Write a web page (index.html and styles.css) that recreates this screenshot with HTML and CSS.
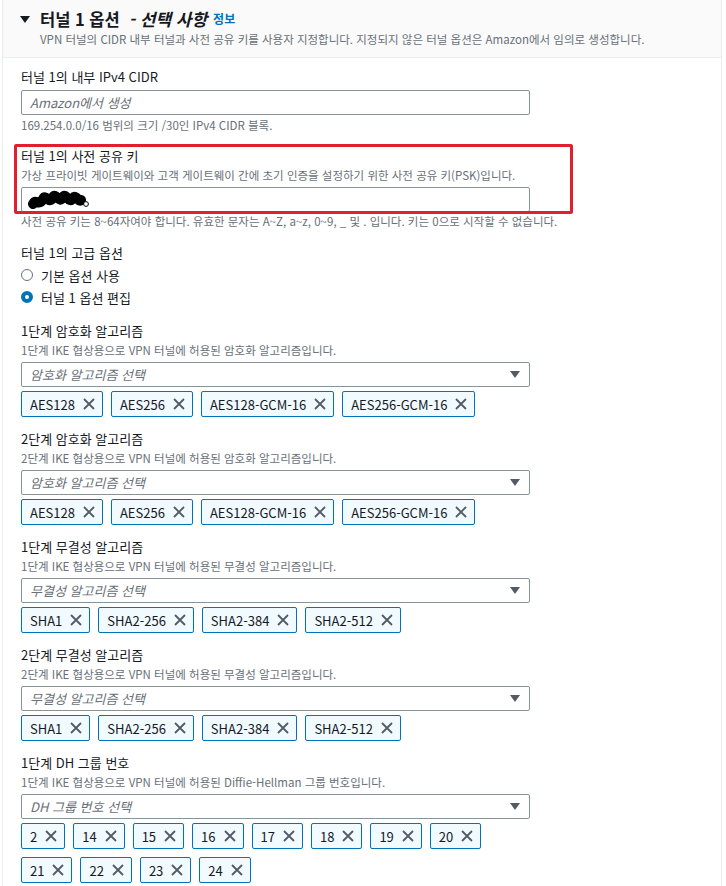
FILE: index.html
```html
<!DOCTYPE html>
<html lang="ko">
<head>
    <meta charset="UTF-8">
    <title>터널 1 옵션</title>
    <link rel="stylesheet" href="styles.css">
</head>
<body>
    <section class="panel">
        <header class="panel-header">
            <h2 class="panel-title">
                <svg class="caret" viewBox="0 0 10 7"><path d="M0 0H10L5 7Z" fill="currentColor"/></svg>
                <span class="title-main">터널 1 옵션</span>
                <span class="title-opt">- 선택 사항</span>
                <a class="info-link">정보</a>
            </h2>
            <p class="panel-desc">VPN 터널의 CIDR 내부 터널과 사전 공유 키를 사용자 지정합니다. 지정되지 않은 터널 옵션은 Amazon에서 임의로 생성합니다.</p>
        </header>

        <div class="panel-body">
            <div class="field field-cidr">
                <div class="label">터널 1의 내부 IPv4 CIDR</div>
                <div class="input placeholder">Amazon에서 생성</div>
                <div class="hint">169.254.0.0/16 범위의 크기 /30인 IPv4 CIDR 블록.</div>
            </div>

            <div class="field field-psk">
                <div class="label">터널 1의 사전 공유 키</div>
                <div class="desc">가상 프라이빗 게이트웨이와 고객 게이트웨이 간에 초기 인증을 설정하기 위한 사전 공유 키(PSK)입니다.</div>
                <div class="input input-psk">
                    <svg class="scribble" viewBox="0 0 62 22">
                        <path d="M5 15 C8 9 11 18 15 10 C18 4 21 17 25 8 C28 3 31 16 35 8 C38 3 41 16 45 9 C48 5 51 14 53 11" fill="none" stroke="#000" stroke-width="10" stroke-linecap="round" stroke-linejoin="round"/>
                        <circle cx="58" cy="15" r="2.4" fill="#fff" stroke="#000" stroke-width="1"/>
                    </svg>
                </div>
                <div class="hint">사전 공유 키는 8~64자여야 합니다. 유효한 문자는 A~Z, a~z, 0~9, _ 및 . 입니다. 키는 0으로 시작할 수 없습니다.</div>
                <div class="highlight"></div>
            </div>

            <div class="field field-adv">
                <div class="label">터널 1의 고급 옵션</div>
                <div class="radios">
                    <div class="radio"><span class="radio-dot"></span>기본 옵션 사용</div>
                    <div class="radio"><span class="radio-dot checked"></span>터널 1 옵션 편집</div>
                </div>
            </div>

            <div class="field field-multi">
                <div class="label">1단계 암호화 알고리즘</div>
                <div class="desc">1단계 IKE 협상용으로 VPN 터널에 허용된 암호화 알고리즘입니다.</div>
                <div class="select"><span class="placeholder">암호화 알고리즘 선택</span><svg class="arrow" viewBox="0 0 10 7"><path d="M0 0H10L5 7Z"/></svg></div>
                <div class="tags">
                    <span class="tag">AES128<svg class="x" viewBox="0 0 12 12"><path d="M1 1L11 11M11 1L1 11"/></svg></span>
                    <span class="tag">AES256<svg class="x" viewBox="0 0 12 12"><path d="M1 1L11 11M11 1L1 11"/></svg></span>
                    <span class="tag">AES128-GCM-16<svg class="x" viewBox="0 0 12 12"><path d="M1 1L11 11M11 1L1 11"/></svg></span>
                    <span class="tag">AES256-GCM-16<svg class="x" viewBox="0 0 12 12"><path d="M1 1L11 11M11 1L1 11"/></svg></span>
                </div>
            </div>

            <div class="field field-multi">
                <div class="label">2단계 암호화 알고리즘</div>
                <div class="desc">2단계 IKE 협상용으로 VPN 터널에 허용된 암호화 알고리즘입니다.</div>
                <div class="select"><span class="placeholder">암호화 알고리즘 선택</span><svg class="arrow" viewBox="0 0 10 7"><path d="M0 0H10L5 7Z"/></svg></div>
                <div class="tags">
                    <span class="tag">AES128<svg class="x" viewBox="0 0 12 12"><path d="M1 1L11 11M11 1L1 11"/></svg></span>
                    <span class="tag">AES256<svg class="x" viewBox="0 0 12 12"><path d="M1 1L11 11M11 1L1 11"/></svg></span>
                    <span class="tag">AES128-GCM-16<svg class="x" viewBox="0 0 12 12"><path d="M1 1L11 11M11 1L1 11"/></svg></span>
                    <span class="tag">AES256-GCM-16<svg class="x" viewBox="0 0 12 12"><path d="M1 1L11 11M11 1L1 11"/></svg></span>
                </div>
            </div>

            <div class="field field-multi">
                <div class="label">1단계 무결성 알고리즘</div>
                <div class="desc">1단계 IKE 협상용으로 VPN 터널에 허용된 무결성 알고리즘입니다.</div>
                <div class="select"><span class="placeholder">무결성 알고리즘 선택</span><svg class="arrow" viewBox="0 0 10 7"><path d="M0 0H10L5 7Z"/></svg></div>
                <div class="tags">
                    <span class="tag">SHA1<svg class="x" viewBox="0 0 12 12"><path d="M1 1L11 11M11 1L1 11"/></svg></span>
                    <span class="tag">SHA2-256<svg class="x" viewBox="0 0 12 12"><path d="M1 1L11 11M11 1L1 11"/></svg></span>
                    <span class="tag">SHA2-384<svg class="x" viewBox="0 0 12 12"><path d="M1 1L11 11M11 1L1 11"/></svg></span>
                    <span class="tag">SHA2-512<svg class="x" viewBox="0 0 12 12"><path d="M1 1L11 11M11 1L1 11"/></svg></span>
                </div>
            </div>

            <div class="field field-multi">
                <div class="label">2단계 무결성 알고리즘</div>
                <div class="desc">2단계 IKE 협상용으로 VPN 터널에 허용된 무결성 알고리즘입니다.</div>
                <div class="select"><span class="placeholder">무결성 알고리즘 선택</span><svg class="arrow" viewBox="0 0 10 7"><path d="M0 0H10L5 7Z"/></svg></div>
                <div class="tags">
                    <span class="tag">SHA1<svg class="x" viewBox="0 0 12 12"><path d="M1 1L11 11M11 1L1 11"/></svg></span>
                    <span class="tag">SHA2-256<svg class="x" viewBox="0 0 12 12"><path d="M1 1L11 11M11 1L1 11"/></svg></span>
                    <span class="tag">SHA2-384<svg class="x" viewBox="0 0 12 12"><path d="M1 1L11 11M11 1L1 11"/></svg></span>
                    <span class="tag">SHA2-512<svg class="x" viewBox="0 0 12 12"><path d="M1 1L11 11M11 1L1 11"/></svg></span>
                </div>
            </div>

            <div class="field field-multi">
                <div class="label">1단계 DH 그룹 번호</div>
                <div class="desc">1단계 IKE 협상용으로 VPN 터널에 허용된 Diffie-Hellman 그룹 번호입니다.</div>
                <div class="select"><span class="placeholder">DH 그룹 번호 선택</span><svg class="arrow" viewBox="0 0 10 7"><path d="M0 0H10L5 7Z"/></svg></div>
                <div class="tags">
                    <span class="tag">2<svg class="x" viewBox="0 0 12 12"><path d="M1 1L11 11M11 1L1 11"/></svg></span>
                    <span class="tag">14<svg class="x" viewBox="0 0 12 12"><path d="M1 1L11 11M11 1L1 11"/></svg></span>
                    <span class="tag">15<svg class="x" viewBox="0 0 12 12"><path d="M1 1L11 11M11 1L1 11"/></svg></span>
                    <span class="tag">16<svg class="x" viewBox="0 0 12 12"><path d="M1 1L11 11M11 1L1 11"/></svg></span>
                    <span class="tag">17<svg class="x" viewBox="0 0 12 12"><path d="M1 1L11 11M11 1L1 11"/></svg></span>
                    <span class="tag">18<svg class="x" viewBox="0 0 12 12"><path d="M1 1L11 11M11 1L1 11"/></svg></span>
                    <span class="tag">19<svg class="x" viewBox="0 0 12 12"><path d="M1 1L11 11M11 1L1 11"/></svg></span>
                    <span class="tag">20<svg class="x" viewBox="0 0 12 12"><path d="M1 1L11 11M11 1L1 11"/></svg></span>
                    <span class="tag">21<svg class="x" viewBox="0 0 12 12"><path d="M1 1L11 11M11 1L1 11"/></svg></span>
                    <span class="tag">22<svg class="x" viewBox="0 0 12 12"><path d="M1 1L11 11M11 1L1 11"/></svg></span>
                    <span class="tag">23<svg class="x" viewBox="0 0 12 12"><path d="M1 1L11 11M11 1L1 11"/></svg></span>
                    <span class="tag">24<svg class="x" viewBox="0 0 12 12"><path d="M1 1L11 11M11 1L1 11"/></svg></span>
                </div>
            </div>
        </div>
    </section>
</body>
</html>
```

FILE: styles.css
```css
:root {
    --clr-text: #16191f;
    --clr-muted: #687078;
    --clr-icon: #545b64;
    --clr-border: #eaeded;
    --clr-input: #879596;
    --clr-primary: #0073bb;
    --clr-tag-bg: #f1faff;
    --clr-mark: #e0202f;
}

* {
    margin: 0;
    padding: 0;
    box-sizing: border-box;
}

body {
    font-family: "Noto Sans CJK KR", "Noto Sans", sans-serif;
    color: var(--clr-text);
    background: #fff;
}

.panel {
    margin-left: 2px;
    width: 720px;
    min-height: 886px;
    border-left: 1px solid var(--clr-border);
    border-right: 1px solid var(--clr-border);
}

.panel-header {
    background: #fafafa;
    border-bottom: 1px solid var(--clr-border);
    padding: 8px 18px 10px 17px;
}

.panel-title {
    display: flex;
    align-items: center;
    height: 22px;
    font-size: 16.5px;
    font-weight: 700;
    line-height: 22px;
}

.caret {
    width: 10px;
    height: 7px;
    margin-right: 10px;
    color: var(--clr-text);
}

.title-opt {
    margin-left: 9px;
    font-size: 17px;
    font-style: italic;
}

.info-link {
    margin-left: 6px;
    font-size: 12px;
    color: var(--clr-primary);
}

.panel-desc {
    margin-top: 1px;
    padding-left: 20px;
    font-size: 11.5px;
    line-height: 16px;
    color: var(--clr-muted);
}

.panel-body {
    padding: 10px 18px 0 18px;
}

.label {
    font-size: 13px;
    line-height: 18px;
}

.desc {
    margin-top: 2px;
    font-size: 11.5px;
    line-height: 16px;
    color: var(--clr-muted);
}

.input,
.select {
    display: flex;
    align-items: center;
    width: 509px;
    height: 25px;
    margin-top: 4px;
    padding: 0 9px 0 8px;
    border: 1px solid var(--clr-input);
    border-radius: 2px;
    background: #fff;
}

.placeholder {
    font-size: 13px;
    font-style: italic;
    color: var(--clr-muted);
}

.input-psk {
    padding-left: 6px;
}

.scribble {
    width: 62px;
    height: 22px;
}

.select {
    justify-content: space-between;
}

.arrow {
    width: 10px;
    height: 7px;
    fill: var(--clr-icon);
}

.hint {
    margin-top: 3px;
    font-size: 11.5px;
    line-height: 14px;
    color: var(--clr-muted);
}

.field-psk {
    position: relative;
    margin-top: 15px;
}

.field-psk .input {
    margin-top: 4px;
}

.field-psk .hint {
    margin-top: 2px;
}

/* annotation box drawn over the field */
.highlight {
    position: absolute;
    left: -7px;
    top: -3px;
    width: 559px;
    height: 70px;
    border: 3px solid var(--clr-mark);
    border-radius: 2px;
    pointer-events: none;
}

.field-adv {
    margin-top: 16px;
}

.radios {
    margin-top: 2px;
}

.radio {
    display: flex;
    align-items: center;
    gap: 8px;
    height: 22px;
    font-size: 13px;
}

.radio-dot {
    width: 12px;
    height: 12px;
    border: 1px solid var(--clr-muted);
    border-radius: 50%;
    background: #fff;
}

.radio-dot.checked {
    border: 4px solid var(--clr-primary);
}

.field-multi {
    margin-top: 13px;
}

.field-adv + .field-multi {
    margin-top: 14px;
}

.tags {
    display: flex;
    flex-wrap: wrap;
    gap: 8px;
    max-width: 509px;
    margin-top: 4px;
}

.tag {
    display: flex;
    align-items: center;
    gap: 8px;
    height: 26px;
    padding: 0 7px 0 8px;
    border: 1px solid var(--clr-primary);
    border-radius: 2px;
    background: var(--clr-tag-bg);
    font-size: 13px;
}

.x {
    width: 12px;
    height: 12px;
    stroke: var(--clr-icon);
    stroke-width: 1.8;
    fill: none;
}
```
